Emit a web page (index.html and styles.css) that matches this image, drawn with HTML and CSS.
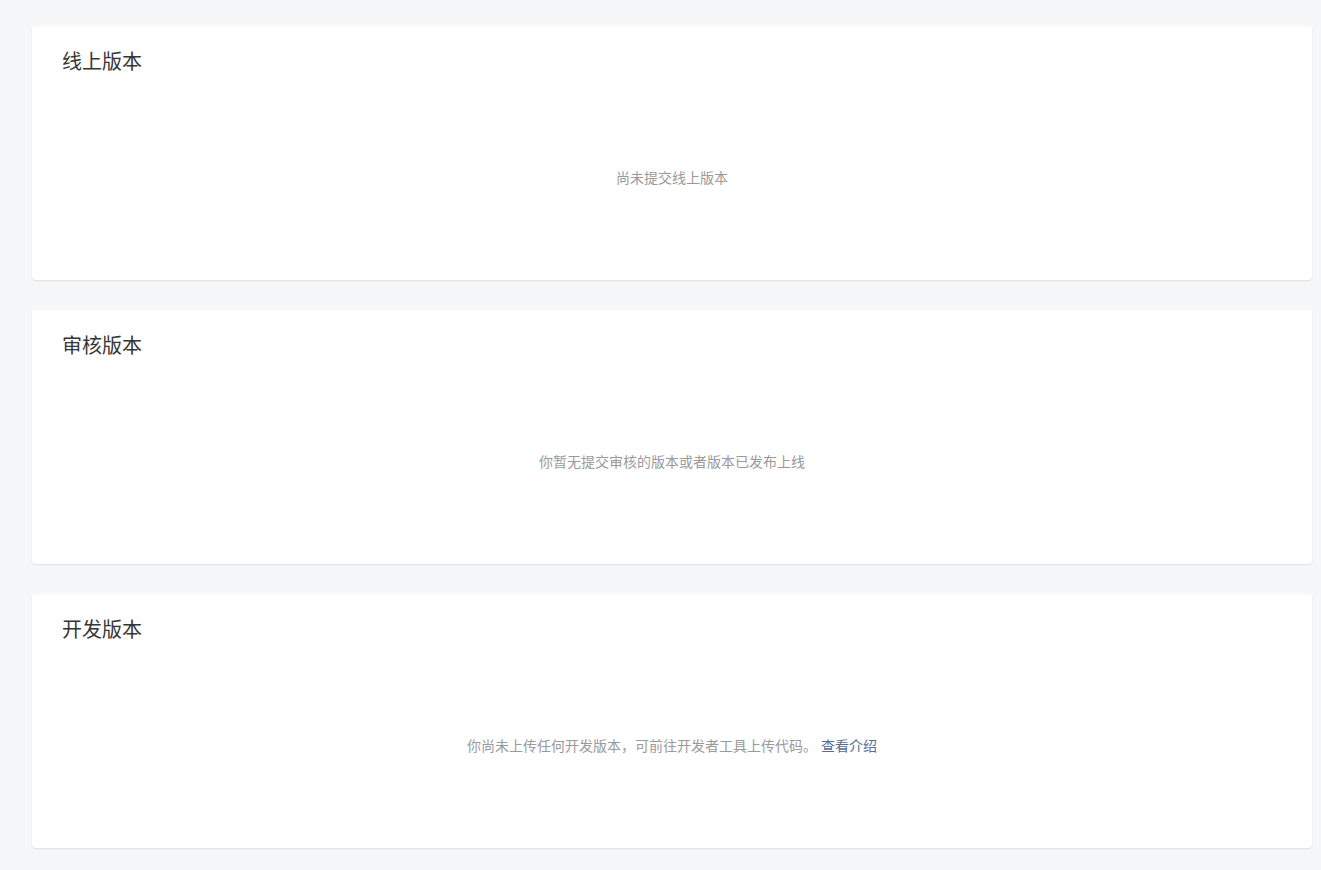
FILE: index.html
```html
<!DOCTYPE html>
<html lang="zh-CN">
<head>
  <meta charset="UTF-8">
  <title>版本管理</title>
  <link rel="stylesheet" href="styles.css">
</head>
<body>
  <div class="versions">
    <section class="card">
      <h2 class="card-title">线上版本</h2>
      <div class="empty">尚未提交线上版本</div>
    </section>

    <section class="card">
      <h2 class="card-title">审核版本</h2>
      <div class="empty">你暂无提交审核的版本或者版本已发布上线</div>
    </section>

    <section class="card">
      <h2 class="card-title">开发版本</h2>
      <div class="empty">你尚未上传任何开发版本，可前往开发者工具上传代码。 <a href="#">查看介绍</a></div>
    </section>
  </div>
</body>
</html>
```

FILE: styles.css
```css
body {
  margin: 0;
  font-family: "Noto Sans CJK SC", "Liberation Sans", sans-serif;
  background-color: #f6f7f9;
  color: #353535;
}

.versions {
  display: flex;
  flex-direction: column;
  gap: 30px;
  padding: 26px 9px 22px 32px;
}

.card {
  background: #fff;
  border-radius: 4px;
  box-shadow: 0 1px 2px rgba(0, 0, 0, 0.1);
  padding: 20px 30px 3px;
}

.card-title {
  margin: 0;
  font-size: 20px;
  font-weight: normal;
  line-height: 30px;
  color: #353535;
}

.empty {
  height: 201px;
  display: flex;
  align-items: center;
  justify-content: center;
  font-size: 14px;
  color: #9a9a9a;
}

.empty a {
  color: #576b95;
  text-decoration: none;
  margin-left: 4px;
}
```
